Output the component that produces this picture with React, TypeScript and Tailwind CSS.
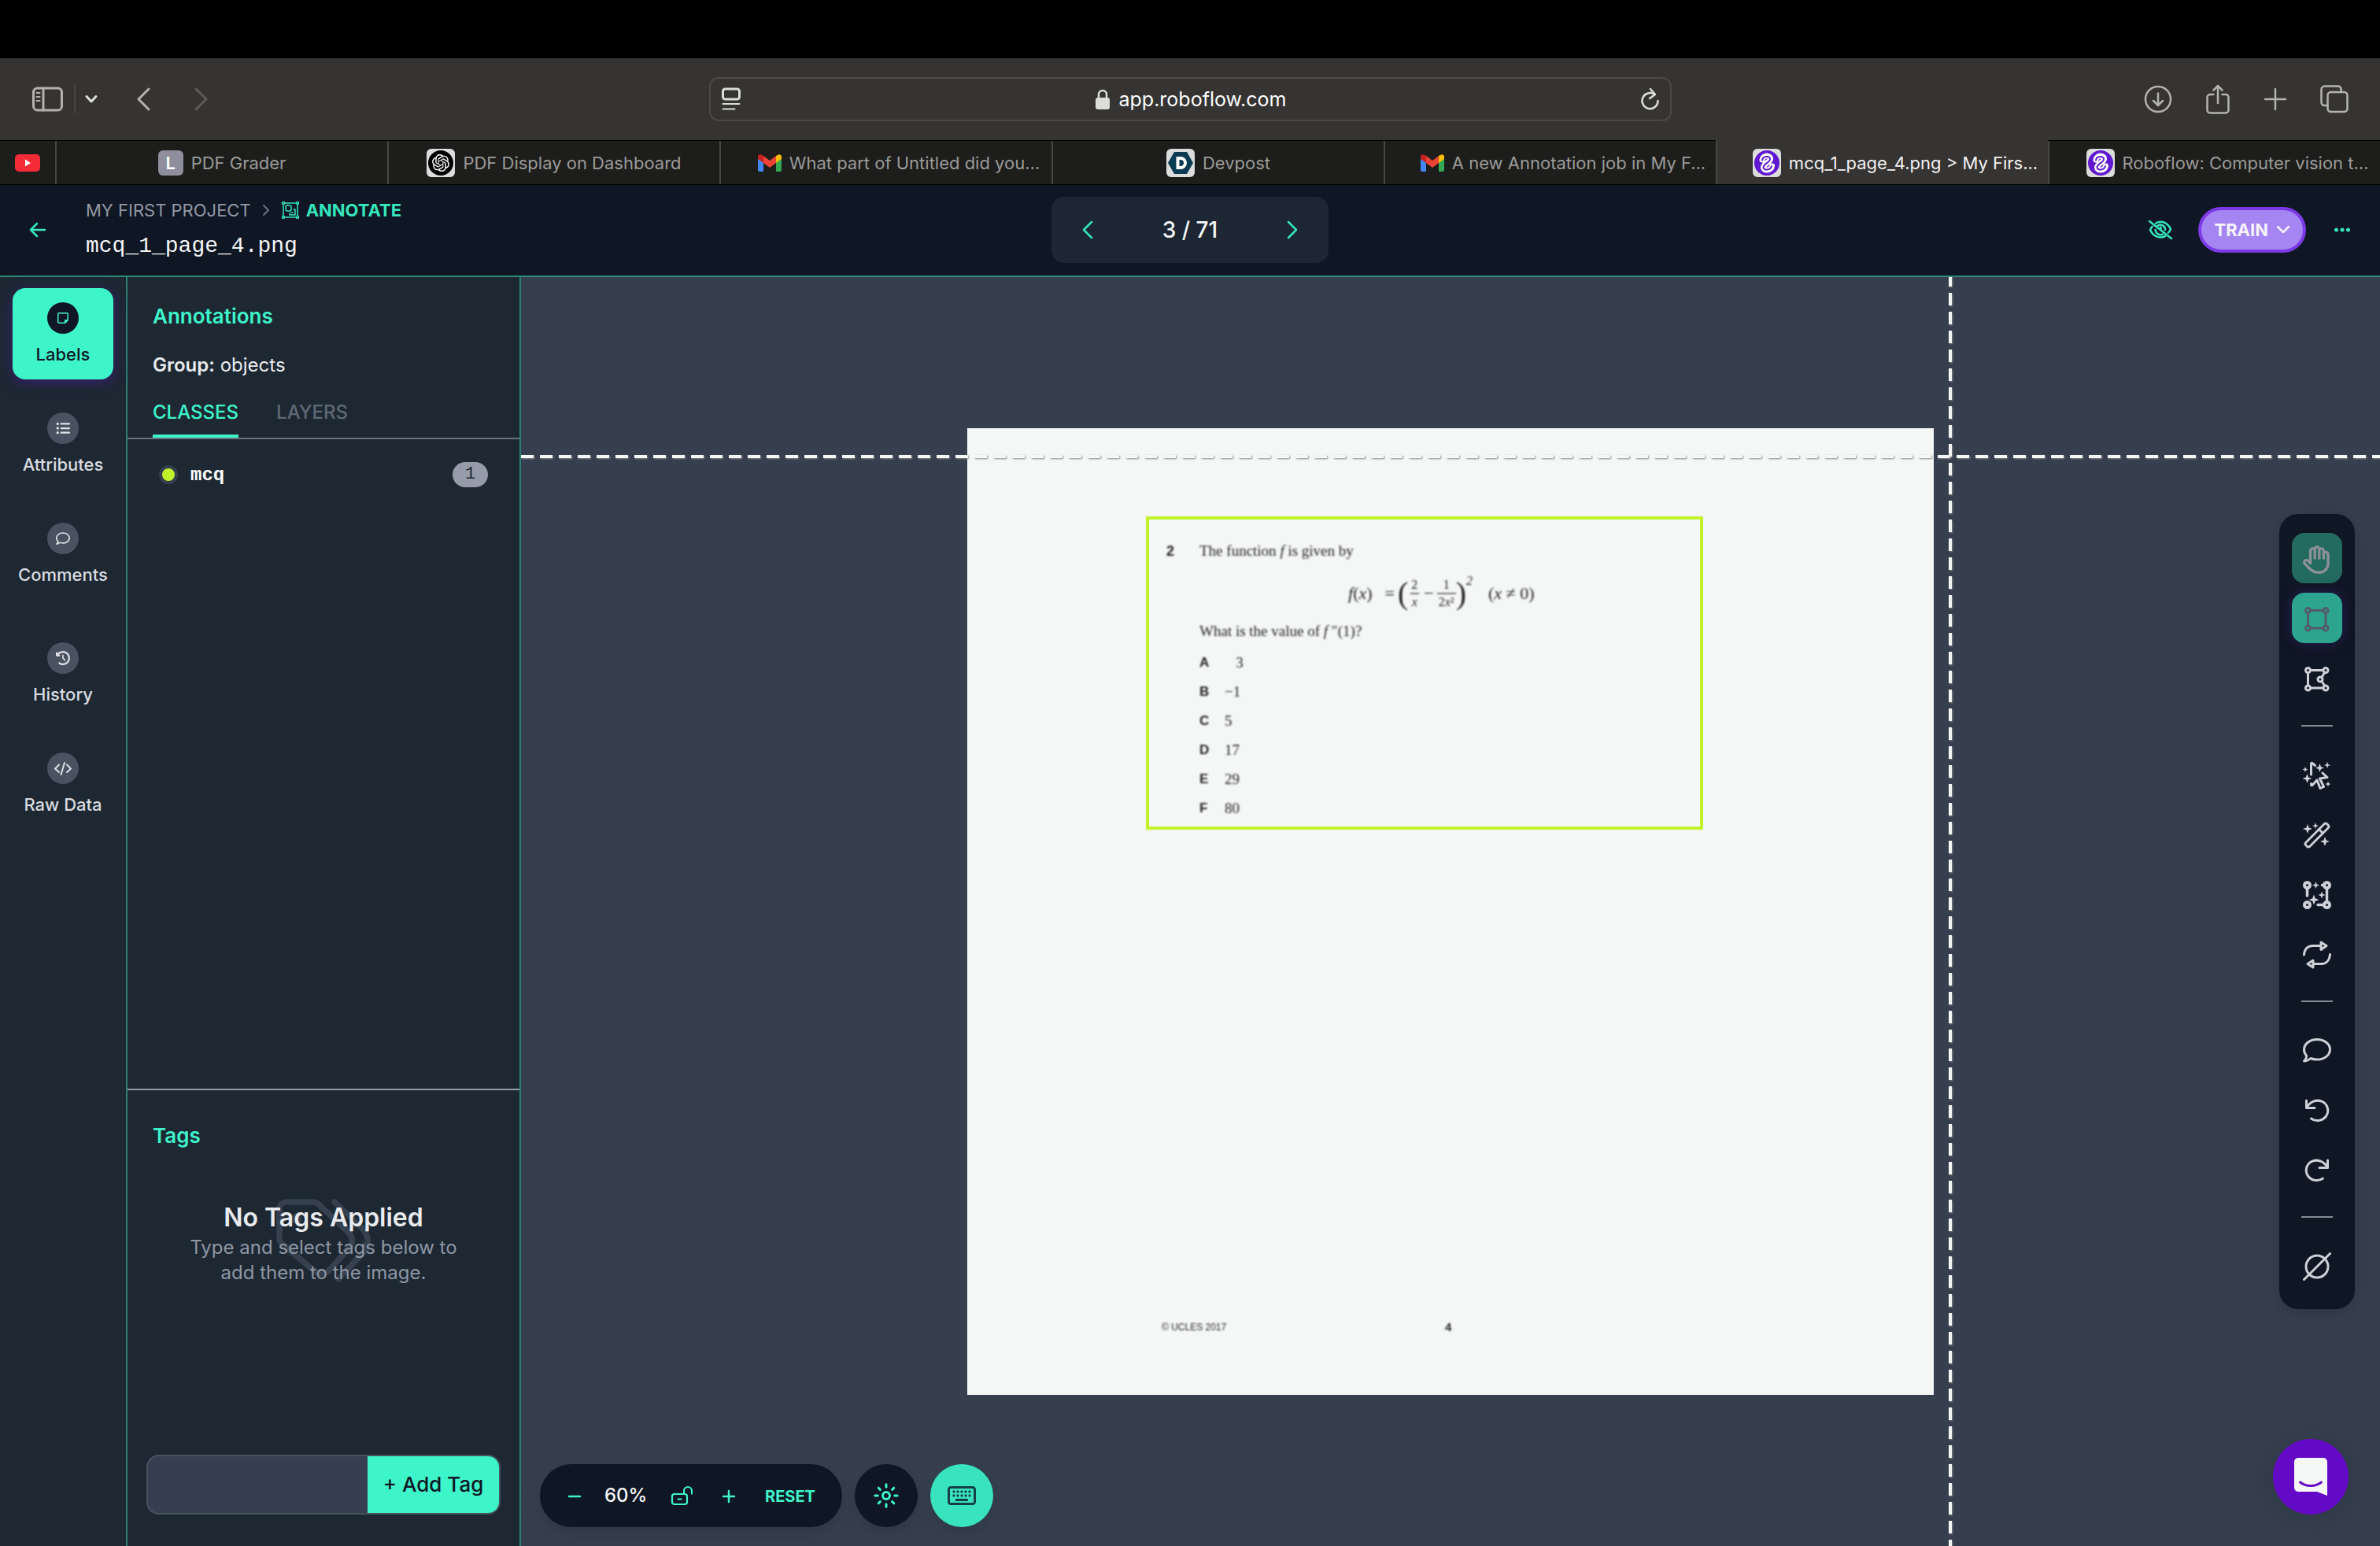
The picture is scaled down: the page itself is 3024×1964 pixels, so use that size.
import type { ReactNode } from "react";
import { FaClockRotateLeft, FaListUl, FaRegComment, FaRegHand, FaRegKeyboard, FaRegNoteSticky } from "react-icons/fa6";
import { SiOpenai } from "react-icons/si";

type SvgProps = { className?: string; children: ReactNode; box?: string; width?: number };

function Stroke({ className, children, box = "0 0 36 36", width = 3 }: SvgProps) {
  return (
    <svg
      viewBox={box}
      className={className}
      fill="none"
      stroke="currentColor"
      strokeWidth={width}
      strokeLinecap="round"
      strokeLinejoin="round"
      aria-hidden="true"
    >
      {children}
    </svg>
  );
}

function Sparkle({ x, y, r }: { x: number; y: number; r: number }) {
  const k = r * 0.27;
  return (
    <path
      stroke="none"
      fill="currentColor"
      d={`M${x} ${y - r}L${x + k} ${y - k}L${x + r} ${y}L${x + k} ${y + k}L${x} ${y + r}L${x - k} ${y + k}L${x - r} ${y}L${x - k} ${y - k}Z`}
    />
  );
}

/* ---------- Browser chrome ---------- */

function GmailIcon() {
  return (
    <svg viewBox="0 0 30 22" className="h-[22px] w-[30px] shrink-0" aria-hidden="true">
      <path fill="#4285f4" d="M0 5v15a2 2 0 0 0 2 2h5V10z" />
      <path fill="#34a853" d="M30 5v15a2 2 0 0 1-2 2h-5V10z" />
      <path fill="#c5221f" d="M0 3v3l7 5V2L5 1C2.500-.8 0 .8 0 3z" />
      <path fill="#fbbc04" d="M30 3v3l-7 5V2l2-1c2.500-1.800 5-.2 5 2z" />
      <path fill="#ea4335" d="M7 2l8 6 8-6v9l-8 6-8-6z" />
    </svg>
  );
}

function RoboflowIcon() {
  return (
    <span className="flex size-9 shrink-0 items-center justify-center rounded-md bg-[#dcdcdc]">
      <svg viewBox="0 0 32 32" className="size-8" fill="none" strokeLinecap="round" aria-hidden="true">
        <circle cx="16" cy="16" r="16" fill="#5f17d0" />
        <path d="M10 12C11 5 21 6 20.500 11C20 15 12 17 11.500 21.500C11.500 26.500 21 26.500 22.500 20" stroke="#fff" strokeWidth="7" />
        <path d="M10 12.500C11 7 20.500 6.500 20 11.500C19.500 15.500 12 17 11.500 21.500C11.500 25.500 20.500 26 22 20" stroke="#5f17d0" strokeWidth="2" />
      </svg>
    </span>
  );
}

function BrowserToolbar() {
  return (
    <div className="flex h-[104px] items-center bg-[#353432] px-10 text-[#b3b2b0]">
      <div className="flex flex-1 items-center">
        <button aria-label="Show sidebar">
          <Stroke box="0 0 40 32" className="h-8 w-10">
            <rect x="2.500" y="2" width="36" height="28" rx="5" />
            <path d="M15 2v28" />
            <path d="M6.500 8h4M6.500 13h4M6.500 18h4" strokeWidth="2" />
          </Stroke>
        </button>
        <span className="ml-3.5 h-9 w-0.5 bg-[#474644]" />
        <button aria-label="Tab groups" className="ml-3 text-[#dededd]">
          <Stroke box="0 0 16 12" className="h-3 w-4">
            <path d="M2 2.500L8 9l6-6.500" />
          </Stroke>
        </button>
        <button aria-label="Back" className="ml-12">
          <Stroke box="0 0 20 30" className="h-[30px] w-5">
            <path d="M17 2L4 15l13 13" />
          </Stroke>
        </button>
        <button aria-label="Forward" className="ml-[54px] text-[#5c5b59]">
          <Stroke box="0 0 20 30" className="h-[30px] w-5">
            <path d="M3 2l13 13L3 28" />
          </Stroke>
        </button>
      </div>
      <div className="flex h-14 w-[1223px] items-center justify-between rounded-xl border-2 border-[#4b4a48] px-3 text-[#dcdcdb]">
        <button aria-label="Reader" className="pl-0.5">
          <Stroke box="0 0 24 30" className="h-[30px] w-6">
            <rect x="1.500" y="2" width="21" height="13" rx="3" />
            <path d="M1.500 21h21M1.500 27.500h15" strokeWidth="2" />
          </Stroke>
        </button>
        <div className="flex items-center gap-3">
          <svg viewBox="0 0 18 26" className="h-[26px] w-[18px]" aria-hidden="true">
            <rect y="11" width="18" height="15" rx="3" fill="currentColor" />
            <path d="M4 12V7a5 5 0 0 1 10 0v5" fill="none" stroke="currentColor" strokeWidth="2.500" />
          </svg>
          <span className="text-[25px] leading-8 text-white">app.roboflow.com</span>
        </div>
        <button aria-label="Reload">
          <Stroke box="0 0 24 30" className="h-[30px] w-6" width={2.5}>
            <path d="M21.500 17a10 10 0 1 1-5-8.500L17.500 9" />
            <path d="M12 2l6 7-7 5" />
          </Stroke>
        </button>
      </div>
      <div className="flex flex-1 items-center justify-end gap-[42px]">
        <button aria-label="Downloads">
          <Stroke className="size-9" width={2.5}>
            <circle cx="18" cy="18" r="16" />
            <path d="M18 10.500v15M12 20l6 6 6-6" />
          </Stroke>
        </button>
        <button aria-label="Share">
          <Stroke box="0 0 32 38" className="h-[38px] w-8" width={2.5}>
            <path d="M10.500 13H6a3.500 3.500 0 0 0-3.500 3.500V33A3.500 3.500 0 0 0 6 36.500h20a3.500 3.500 0 0 0 3.500-3.500V16.500A3.500 3.500 0 0 0 26 13h-4.500M16 2v22M10.500 7.500L16 2l5.500 5.500" />
          </Stroke>
        </button>
        <button aria-label="New tab">
          <Stroke box="0 0 30 30" className="size-[30px]" width={2.5}>
            <path d="M15 2v26M2 15h26" />
          </Stroke>
        </button>
        <button aria-label="Tab overview">
          <Stroke className="size-9" width={2.500}>
            <rect x="9.500" y="9" width="25" height="25" rx="4" />
            <path d="M26.500 9V5A4 4 0 0 0 22.500 1.500H5.500a4 4 0 0 0-4 4v16.500a4 4 0 0 0 4 4h4" />
          </Stroke>
        </button>
      </div>
    </div>
  );
}

function BrowserTab({ icon, title, active, long }: { icon: ReactNode; title: string; active?: boolean; long?: boolean }) {
  return (
    <button
      className={
        "min-w-0 flex-1 border-l-2 border-[#474644] text-[22px] leading-7 " +
        (active ? "-mt-px bg-[#353432] pt-px text-[#f2f2f2]" : "text-[#9b9b99]")
      }
    >
      <span className={"flex items-center justify-center gap-2.5 whitespace-nowrap " + (long ? "pl-12 pr-4" : "")}>
        {icon}
        <span>{title}</span>
      </span>
    </button>
  );
}

function BrowserTabs() {
  return (
    <nav aria-label="Browser tabs" className="flex h-[57px] border-y border-black bg-[#1d1d1b]">
      <button aria-label="YouTube" className="flex w-[70px] items-center justify-center">
        <svg viewBox="0 0 32 22" className="h-[22px] w-8" aria-hidden="true">
          <rect width="32" height="22" rx="5" fill="#f42c37" />
          <path d="M13 6.500v9l7-4.500z" fill="#fff" />
        </svg>
      </button>
      <BrowserTab
        title="PDF Grader"
        icon={
          <span className="flex size-8 items-center justify-center rounded-md bg-[#8e8e9c] text-[22px] font-semibold text-white">
            L
          </span>
        }
      />
      <BrowserTab
        title="PDF Display on Dashboard"
        icon={
          <span className="flex size-9 items-center justify-center rounded-md bg-[#dcdcdc]">
            <span className="flex size-8 items-center justify-center rounded-full bg-black text-white">
              <SiOpenai className="size-[22px]" />
            </span>
          </span>
        }
      />
      <BrowserTab long title="What part of Untitled did you..." icon={<GmailIcon />} />
      <BrowserTab
        title="Devpost"
        icon={
          <span className="flex size-9 items-center justify-center rounded-md bg-[#dcdcdc]">
            <svg viewBox="0 0 32 32" className="size-8" aria-hidden="true">
              <path d="M8 2h16l8 14-8 14H8L0 16z" fill="#0b3c52" />
              <path d="M10.500 8H16a8 8 0 0 1 0 16h-5.500zM14.500 12v8H16a4 4 0 0 0 0-8z" fill="#fff" fillRule="evenodd" />
            </svg>
          </span>
        }
      />
      <BrowserTab long title="A new Annotation job in My F..." icon={<GmailIcon />} />
      <BrowserTab long active title="mcq_1_page_4.png > My Firs..." icon={<RoboflowIcon />} />
      <BrowserTab long title="Roboflow: Computer vision t..." icon={<RoboflowIcon />} />
    </nav>
  );
}

/* ---------- App header ---------- */

function AppHeader() {
  return (
    <header className="flex h-[117px] items-center border-b-2 border-[#2b8a7b] bg-[#0f1624] pb-px text-[#36e6bc]">
      <div className="flex flex-1 items-center">
        <a href="#back" aria-label="Back to project" className="ml-9 mr-[49px]">
          <Stroke box="0 0 24 24" className="size-6" width={2.5}>
            <path d="M21 12H3M11 4l-8 8 8 8" />
          </Stroke>
        </a>
        <div className="flex flex-col gap-3 pb-0.5">
          <nav aria-label="Breadcrumb" className="flex items-center text-[22px] leading-8">
            <a href="#project" className="text-[#9299a5]">MY FIRST PROJECT</a>
            <Stroke box="0 0 10 16" className="mx-3.5 h-4 w-2.5 text-[#69717e]" width={2}>
              <path d="M2 2l6 6-6 6" />
            </Stroke>
            <Stroke box="0 0 24 24" className="mr-2 size-6" width={1.5}>
              <path d="M4.500 3h15M4.500 21h15M3 4.500v15M21 4.500v15" />
              <circle cx="3" cy="3" r="1.500" />
              <circle cx="21" cy="3" r="1.500" />
              <circle cx="3" cy="21" r="1.500" />
              <circle cx="21" cy="21" r="1.500" />
              <rect x="6" y="6" width="7" height="7" rx="2" />
              <path d="M16 11h2v7h-7v-2M13 15h2" />
            </Stroke>
            <a href="#annotate" className="font-bold">ANNOTATE</a>
          </nav>
          <h1 className="font-['Liberation_Mono',monospace] text-[28px] leading-9 text-[#f5f6f7]">mcq_1_page_4.png</h1>
        </div>
      </div>
      <div className="flex h-[84px] w-[352px] items-center justify-between rounded-2xl bg-[#1d2733] px-9">
        <button aria-label="Previous image">
          <Stroke box="0 0 20 24" className="h-6 w-5" width={2.5}>
            <path d="M15 2L5 12l10 10" />
          </Stroke>
        </button>
        <span className="text-[28px] font-medium leading-9 text-[#f5f6f7]">3 / 71</span>
        <button aria-label="Next image">
          <Stroke box="0 0 20 24" className="h-6 w-5" width={2.5}>
            <path d="M5 2l10 10L5 22" />
          </Stroke>
        </button>
      </div>
      <div className="flex flex-1 items-center justify-end">
        <button aria-label="Hide annotations">
          <Stroke box="0 0 32 26" className="h-[26px] w-8" width={2.5}>
            <path d="M2 2l28 22" />
            <path d="M10 4.500C19 0 26 5.500 29 12c-.6 1.700-1.700 3.400-3 4.700M22 21C13.500 25 6 20 3 13c.6-1.700 1.500-3 2.600-4.300" />
            <path d="M12.500 7.800c4-3 10 .2 9.500 5.200M19 18.500c-4 2-9-.5-9.300-5.500M16 9.500c1 1.500.5 3 0 3" />
          </Stroke>
        </button>
        <button className="ml-8 flex h-[58px] items-center gap-2.5 rounded-full border-4 border-[#7c3ae6] bg-[#a485f2] px-4 text-[22px] font-bold leading-7 text-[#f5f3fb]">
          TRAIN
          <Stroke box="0 0 18 12" className="h-3 w-[18px]" width={2.5}>
            <path d="M2 2l7 7 7-7" />
          </Stroke>
        </button>
        <button aria-label="More options" className="ml-[34px] mr-9">
          <svg viewBox="0 0 24 6" className="h-1.5 w-6" fill="currentColor" aria-hidden="true">
            <circle cx="4.500" cy="3" r="2.500" />
            <circle cx="12" cy="3" r="2.500" />
            <circle cx="19.500" cy="3" r="2.500" />
          </svg>
        </button>
      </div>
    </header>
  );
}

/* ---------- Left rail ---------- */

function RailItem({ icon, label, active, spaced }: { icon: ReactNode; label: string; active?: boolean; spaced?: boolean }) {
  return (
    <button
      className={
        "flex h-[116px] w-32 flex-col items-center gap-2.5 rounded-2xl pt-[18px] text-[22px] font-medium leading-8 " +
        (spaced ? "mt-3 " : "") +
        (active ? "bg-[#3ef5ca] text-[#0f1624] shadow-[0_4px_16px_#3b1d6e]" : "text-[#d9dce0]")
      }
    >
      <span
        className={
          "flex size-10 shrink-0 items-center justify-center rounded-full " +
          (active ? "bg-[#0f1624] text-[#3ef5ca]" : "bg-[#485261] text-[#dfe1e5]")
        }
      >
        {icon}
      </span>
      <span>{label}</span>
    </button>
  );
}

function Rail() {
  return (
    <nav aria-label="Panels" className="flex w-[162px] shrink-0 flex-col items-center gap-6 border-r-2 border-[#2a7f73] bg-[#1d2833] pt-3.5">
      <RailItem active label="Labels" icon={<FaRegNoteSticky className="size-4" />} />
      <RailItem label="Attributes" icon={<FaListUl className="size-[18px]" />} />
      <RailItem label="Comments" icon={<FaRegComment className="size-[18px]" />} />
      <RailItem spaced label="History" icon={<FaClockRotateLeft className="size-[18px]" />} />
      <RailItem
        label="Raw Data"
        icon={
          <Stroke box="0 0 24 18" className="h-[18px] w-6" width={2}>
            <path d="M7 4.500L2 9.500l5 4.500M17 4.500l5 5-5 4.500M14 2l-4.500 15" />
          </Stroke>
        }
      />
    </nav>
  );
}

/* ---------- Side panel ---------- */

function SidePanel() {
  return (
    <aside className="flex w-[500px] shrink-0 flex-col border-r-2 border-[#2a7f73] bg-[#1d2833] text-[#e9ebee]">
      <section className="flex flex-1 flex-col">
        <h2 className="px-8 pt-8 text-[26px] font-semibold leading-9 text-[#3ef5ca]">Annotations</h2>
        <p className="px-8 pt-7 text-[24px] leading-8">
          <strong className="font-semibold">Group:</strong> objects
        </p>
        <div role="tablist" className="flex items-start gap-12 border-b-2 border-[#6b7280] px-8 pt-7 text-[24px] font-medium leading-8">
          <button role="tab" aria-selected="true" className="border-b-4 border-[#3ef5ca] pb-3 text-[#3ef5ca]">
            CLASSES
          </button>
          <button role="tab" aria-selected="false" className="text-[#5f6875]">
            LAYERS
          </button>
        </div>
        <ul>
          <li className="flex items-center pl-10 pr-10 pt-7">
            <span className="size-6 rounded-full border-4 border-[#363f4f] bg-[#c1f32b]" />
            <span className="ml-4 flex-1 pt-0.5 font-['Liberation_Mono',monospace] text-[24px] font-bold leading-8 text-white">mcq</span>
            <span className="flex h-8 w-[45px] items-center justify-center rounded-full bg-[#959ba8] font-['Liberation_Mono',monospace] text-[22px] leading-7 text-[#1d2833]">
              1
            </span>
          </li>
        </ul>
      </section>
      <section className="flex h-[581px] flex-col border-t-2 border-[#959ba8]">
        <h2 className="px-8 pt-10 text-[26px] font-semibold leading-9 text-[#3ef5ca]">Tags</h2>
        <div className="relative mt-16 flex flex-col items-center text-center">
          <Stroke box="0 0 120 106" className="absolute left-[189px] -top-0.5 h-[106px] w-[120px] text-[#36404e]" width={7.5}>
            <path d="M14 4h33c3 0 5 1 7 3l38 36c6 6 6 14 0 20L66 92c-5 4-12 4-17 0L8 58c-3-2-4-5-4-8V13c0-5 4-9 10-9z" />
            <path d="M74 4l34 32c11 11 11 24 0 35L79 102" />
            <circle cx="26" cy="25" r="3" />
          </Stroke>
          <h3 className="relative text-[32px] font-semibold leading-[44px]">No Tags Applied</h3>
          <p className="relative text-[24px] leading-8 text-[#8f97a3]">
            Type and select tags below to
            <br />
            add them to the image.
          </p>
        </div>
        <form className="mx-6 mb-10 mt-auto flex h-[76px] overflow-hidden rounded-2xl border-2 border-[#485261] bg-[#363f4f]">
          <input aria-label="Tag name" className="min-w-0 flex-1 bg-transparent px-4 text-[24px] outline-none" />
          <button type="button" className="w-[167px] bg-[#3ef5ca] text-[26px] font-medium leading-8 text-[#0f1624]">
            + Add Tag
          </button>
        </form>
      </section>
    </aside>
  );
}

/* ---------- Annotated document ---------- */

const CHOICES = [
  ["A", "\u00a0\u00a0\u00a03"],
  ["B", "−1"],
  ["C", "5"],
  ["D", "17"],
  ["E", "29"],
  ["F", "80"],
];

function Fraction({ top, bottom }: { top: ReactNode; bottom: ReactNode }) {
  return (
    <span className="flex flex-col items-center text-[16px] leading-5">
      <span className="px-1">{top}</span>
      <span className="border-t-2 border-[#777] px-0.5">{bottom}</span>
    </span>
  );
}

function DocumentPage() {
  return (
    <article className="relative flex size-[1228px] flex-col bg-[#f5f7f6] font-['Liberation_Serif',serif] text-[19px] leading-7 text-[#222]">
      <div className="flex gap-8 pl-[253px] pt-[142px] blur-[1px]">
        <b className="font-['Liberation_Sans',sans-serif] text-[18px]">2</b>
        <div>
          <p>The function <i>f</i> is given by</p>
          <div className="flex h-20 items-center pl-[189px] text-[22px]">
            <span><i>f</i>(<i>x</i>)</span>
            <span className="ml-4">=</span>
            <span className="ml-1 text-[40px] leading-[40px]">(</span>
            <Fraction top="2" bottom={<i>x</i>} />
            <span className="mx-1">−</span>
            <Fraction top="1" bottom={<>2<i>x</i>²</>} />
            <span className="text-[40px] leading-[40px]">)</span>
            <span className="mb-8 text-[16px] italic">2</span>
            <span className="ml-5">(<i>x</i> ≠ 0)</span>
          </div>
          <p className="-mt-1.5">What is the value of <i>f</i> ″(1)?</p>
          <dl className="mt-2 grid grid-cols-[32px_auto]">
            {CHOICES.map(([letter, value]) => (
              <div key={letter} className="contents">
                <dt className="h-[37px] pt-1 font-['Liberation_Sans',sans-serif] text-[17px] font-bold">{letter}</dt>
                <dd className="pt-1">{value}</dd>
              </div>
            ))}
          </dl>
        </div>
      </div>
      <footer className="mt-auto flex pb-[72px] pl-[247px] font-['Liberation_Sans',sans-serif] text-[12px] blur-[1px]">
        <span className="w-[360px]">© UCLES 2017</span>
        <b className="text-[15px]">4</b>
      </footer>
      <div className="absolute left-[227px] top-[112px] h-[398px] w-[708px] border-4 border-[#c1f32b]" />
    </article>
  );
}

/* ---------- Tools ---------- */

function Corners() {
  return (
    <>
      <circle cx="6.500" cy="6.500" r="3" />
      <circle cx="29" cy="6.500" r="3" />
      <circle cx="6.500" cy="29" r="3" />
      <circle cx="29" cy="29" r="3" />
    </>
  );
}

function Tool({ label, tone, children }: { label: string; tone?: string; children: ReactNode }) {
  return (
    <button aria-label={label} className={"flex size-16 items-center justify-center rounded-2xl pt-1 " + (tone ?? "text-[#cdd0d6]")}>
      {children}
    </button>
  );
}

function Divider() {
  return <hr className="my-4 w-10 border-t-2 border-[#868b93]" />;
}

function ToolPalette() {
  return (
    <div
      role="toolbar"
      aria-label="Annotation tools"
      className="absolute right-8 top-[301px] flex w-24 flex-col items-center gap-3 rounded-3xl bg-[#0f1624] py-6 shadow-[0_4px_16px_#2b3543]"
    >
      <Tool label="Drag" tone="bg-[#236a61] text-[#8b9097]">
        <FaRegHand className="size-9" />
      </Tool>
      <Tool label="Bounding box" tone="bg-[#2da58e] text-[#515c6a] shadow-[0_0_16px_#2b1d55]">
        <Stroke className="size-9">
          <Corners />
          <path d="M10 6.500h15.500M10 29h15.500M6.500 10v15.500M29 10v15.500" />
        </Stroke>
      </Tool>
      <Tool label="Polygon">
        <Stroke className="size-9">
          <Corners />
          <circle cx="22" cy="18" r="3" />
          <path d="M10 6.500h15.500M10 29h15.500M6.500 10v15.500M27.500 9.500l-3.500 6M27.500 26l-3.500-5.500" />
        </Stroke>
      </Tool>
      <Divider />
      <Tool label="Smart select">
        <Stroke className="size-9">
          <path d="M10.500 17V3.500Q10.500 1.500 12 2.500L15.500 5.500" />
          <path d="M25 15l6 5.500-9.500 1.500 5 10.500-4.500 2-4-10.500-6 6.500q-1.500 1-1.500-1v-1" />
          <Sparkle x={21.500} y={8.500} r={5.500} />
          <Sparkle x={31} y={5} r={4} />
          <Sparkle x={3} y={10.500} r={3.500} />
          <Sparkle x={5.500} y={22} r={6} />
          <Sparkle x={32} y={29} r={3.500} />
        </Stroke>
      </Tool>
      <Tool label="Auto label">
        <Stroke className="size-9" width={2.800}>
          <g transform="translate(18 18) rotate(-45)">
            <rect x="-19" y="-3.500" width="38" height="7" rx="2.500" />
            <path d="M7 -3.500v7" />
          </g>
          <Sparkle x={6} y={10} r={6} />
          <Sparkle x={16} y={6} r={4} />
          <Sparkle x={28} y={26} r={6} />
        </Stroke>
      </Tool>
      <Tool label="Smart polygon">
        <Stroke className="size-9">
          <circle cx="5.500" cy="5.500" r="3.500" strokeWidth="4" />
          <circle cx="30.500" cy="5.500" r="3.500" strokeWidth="4" />
          <circle cx="5.500" cy="30.500" r="3.500" strokeWidth="4" />
          <circle cx="30.500" cy="30.500" r="3.500" strokeWidth="4" />
          <path d="M5.500 10v9M30.500 10v17M19 30.500h8M24.500 5.500h3" strokeWidth="3.500" />
          <Sparkle x={16.500} y={5.500} r={4.500} />
          <Sparkle x={14} y={24} r={6.500} />
          <Sparkle x={24} y={18} r={4.500} />
        </Stroke>
      </Tool>
      <Tool label="Repeat previous">
        <Stroke className="size-9">
          <path d="M1.500 18C2 11 6 6.500 12.500 6.500H22M23 2l7 4.500-7 5zM34.500 17.500C34 24.500 30 29.500 23.500 29.500H14M13 25l-7 4.500 7 4.500z" />
        </Stroke>
      </Tool>
      <Divider />
      <Tool label="Comment">
        <Stroke className="size-9">
          <path d="M18 3.500c9.200 0 16.500 5.600 16.500 12.800S27.200 29 18 29c-3 0-5.500-.5-8-1.500-2.200 2-5 3.300-8.500 3.500 2-2 3.200-4.200 3.300-6.500C2.700 22.200 1.500 19.300 1.500 16.300 1.500 9.100 8.800 3.500 18 3.500z" />
        </Stroke>
      </Tool>
      <Tool label="Undo">
        <Stroke className="size-9">
          <path d="M4.500 5v9.500H15M4.500 14.500C9 6 17.500 3.500 24 6.200c7.500 3.300 10 12 5.500 18.800-4.500 6-13 7.300-19 3" />
        </Stroke>
      </Tool>
      <Tool label="Redo">
        <Stroke className="size-9">
          <path d="M31.500 5v9.500H21M31.500 14.500C27 6 18.500 3.500 12 6.200 4.500 9.500 2 18.200 6.500 25c4.500 6 13 7.300 19 3" />
        </Stroke>
      </Tool>
      <Divider />
      <Tool label="Mark null">
        <Stroke className="size-9">
          <circle cx="18" cy="18" r="14" />
          <path d="M1.500 34.500l33-33" />
        </Stroke>
      </Tool>
    </div>
  );
}

function ZoomBar() {
  return (
    <div className="absolute bottom-6 left-6 flex items-center gap-4 text-[#3ef5ca]">
      <div className="flex h-20 w-[384px] items-center rounded-full bg-[#0f1624] pl-[34px] shadow-[0_8px_16px_#2f3946]">
        <button aria-label="Zoom out">
          <Stroke box="0 0 20 20" className="size-5" width={2.5}>
            <path d="M3 11h14" />
          </Stroke>
        </button>
        <span className="ml-7 w-[54px] text-center text-[24px] font-medium leading-8 text-[#f5f6f7]">60%</span>
        <button aria-label="Unlock zoom" className="ml-[30px]">
          <Stroke box="0 0 28 26" className="h-[26px] w-7" width={2.2}>
            <rect x="2" y="11" width="19" height="13" rx="3" />
            <path d="M17 11V7a5 5 0 0 1 10 0v3.500M9.500 17.500h4" />
          </Stroke>
        </button>
        <button aria-label="Zoom in" className="ml-9">
          <Stroke box="0 0 20 20" className="size-5" width={2.5}>
            <path d="M3 11h14M10 4v14" />
          </Stroke>
        </button>
        <button className="ml-9 pt-0.5 text-[20px] font-bold leading-7">RESET</button>
      </div>
      <button aria-label="Brightness" className="flex size-20 items-center justify-center rounded-full bg-[#0f1624] shadow-[0_8px_16px_#2f3946]">
        <Stroke box="0 0 32 32" className="size-8" width={3}>
          <circle cx="16" cy="16" r="4.500" />
          <path d="M16 1.800v3.500M16 26.700v3.500M1.800 16h3.500M26.700 16h3.500M6.200 6.200l2.200 2.200M23.600 23.600l2.200 2.200M25.800 6.200l-2.200 2.200M8.400 23.600l-2.200 2.200" />
        </Stroke>
      </button>
      <button aria-label="Keyboard shortcuts" className="flex size-20 items-center justify-center rounded-full bg-[#38e3bd] text-[#173f49] shadow-[0_8px_16px_#2f3946]">
        <FaRegKeyboard className="size-9" />
      </button>
    </div>
  );
}

function Canvas() {
  return (
    <main className="relative flex flex-1 items-center justify-center overflow-hidden bg-[#363f4e]">
      <DocumentPage />
      <div className="absolute inset-x-0 top-[226px] h-1 bg-[repeating-linear-gradient(to_right,#f5f7f6_0_16px,transparent_16px_24px)] drop-shadow-[1px_1px_1px_#888]" />
      <div className="absolute -top-1 bottom-0 right-[544px] w-1 bg-[repeating-linear-gradient(to_bottom,#f5f7f6_0_16px,transparent_16px_24px)] drop-shadow-[1px_1px_1px_#888]" />
      <ToolPalette />
      <ZoomBar />
      <button
        aria-label="Open chat"
        className="absolute bottom-10 right-10 flex size-24 items-center justify-center rounded-full bg-[#6409c6] shadow-[0_4px_32px_#2b3744]"
      >
        <svg viewBox="0 0 42 48" className="h-12 w-[42px]" aria-hidden="true">
          <path d="M5 0h32a5 5 0 0 1 5 5v43l-13-5H5a5 5 0 0 1-5-5V5a5 5 0 0 1 5-5z" fill="#f5f7f6" />
          <path d="M7.500 31C15 37 27 37 34.500 31" fill="none" stroke="#6409c6" strokeWidth="3" strokeLinecap="round" />
        </svg>
      </button>
    </main>
  );
}

export default function App() {
  return (
    <div className="flex min-h-screen flex-col bg-black font-[Inter,sans-serif]">
      <div className="h-[74px]" />
      <BrowserToolbar />
      <BrowserTabs />
      <AppHeader />
      <div className="flex flex-1">
        <Rail />
        <SidePanel />
        <Canvas />
      </div>
    </div>
  );
}
